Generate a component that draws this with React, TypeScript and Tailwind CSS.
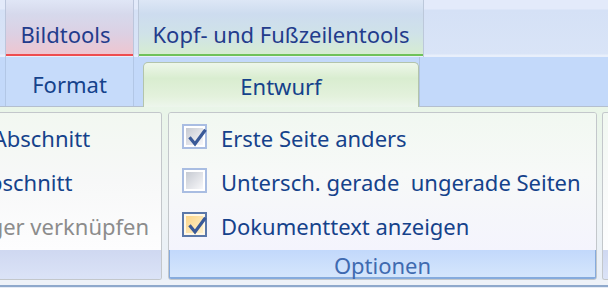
import React from "react";

const Check = () => (
  <svg width="25" height="25" viewBox="0 0 25 25" className="absolute left-0 top-0">
    <path d="M6.5 12.5 L11 18 L20.5 5" fill="none" stroke="#3a5a98" strokeWidth="3.2" strokeLinecap="square" />
  </svg>
);

function Box({ hover, checked }: { hover?: boolean; checked?: boolean }) {
  return (
    <div
      className={
        hover
          ? "relative w-[25px] h-[25px] shrink-0 border-2 border-[#5b78a9] p-[2px] bg-[#fff8e6]"
          : "relative w-[25px] h-[25px] shrink-0 border-2 border-[#a9bde2] p-[2px] bg-white"
      }
    >
      <div
        className={
          hover
            ? "w-full h-full bg-[linear-gradient(135deg,#fbd488,#fff2cc)]"
            : "w-full h-full bg-[linear-gradient(135deg,#c6cad2,#f8f8fa)]"
        }
      />
      {checked && <Check />}
    </div>
  );
}

function OptRow({ label, hover, checked, last }: { label: string; hover?: boolean; checked?: boolean; last?: boolean }) {
  return (
    <div className={last ? "flex items-center gap-[14px] h-[25px]" : "flex items-center gap-[14px] h-[25px] mb-[19px]"}>
      <Box hover={hover} checked={checked} />
      <span className="whitespace-pre pt-[2px] text-[#15428b]">{label}</span>
    </div>
  );
}

function NavRow({ label, disabled, last }: { label: string; disabled?: boolean; last?: boolean }) {
  return (
    <div className={last ? "flex items-center h-[25px]" : "flex items-center h-[25px] mb-[19px]"}>
      <span className={disabled ? "whitespace-pre pt-[2px] text-[#8c8c8c]" : "whitespace-pre pt-[2px] text-[#15428b]"}>{label}</span>
    </div>
  );
}

export default function App() {
  return (
    <div className="w-[608px] h-[288px] overflow-hidden flex flex-col text-[22px] leading-none font-['Noto_Sans',sans-serif] bg-[#c3d9fa]">
      {/* contextual tab group headers */}
      <div className="h-[57px] shrink-0 flex bg-[linear-gradient(to_bottom,#e3eafa_0px,#e3eafa_9px,#d5e1f6_10px,#d9e4f7_54px,#e8effb_55px,#e8effb_57px)]">
        <div className="w-[5px]" />
        <div className="w-[129px] border-x border-[#bcc6dc] flex flex-col">
          <div className="flex-1 flex items-center justify-center pt-[13px] pr-[8px] text-[#233c8c] bg-[linear-gradient(to_bottom,#e0e6f6_0px,#d6d9ec_14px,#dcd0e3_34px,#eec6d0_54px)]">
            Bildtools
          </div>
          <div className="h-[2px] bg-[#ee4d4f]" />
          <div className="h-[1px]" />
        </div>
        <div className="w-[4px]" />
        <div className="w-[286px] border-x border-[#bcc8da] flex flex-col">
          <div className="flex-1 flex items-center justify-center pt-[13px] text-[#233c8c] bg-[linear-gradient(to_bottom,#dde7f6_0px,#cddcef_14px,#cfe2e8_34px,#d6ecd2_54px)]">
            Kopf- und Fußzeilentools
          </div>
          <div className="h-[2px] bg-[#6fc25a]" />
          <div className="h-[1px]" />
        </div>
        <div className="flex-1" />
      </div>

      {/* tabs row */}
      <div className="h-[50px] shrink-0 flex bg-[#c3d9fa]">
        <div className="w-[143px] border-b border-[#b4bfcf] flex">
          <div className="ml-[5px] w-[129px] border-x border-[#b2c7e6] flex items-center justify-center pt-[5px] text-[#15428b] bg-[#c6dbfa]">
            Format
          </div>
        </div>
        <div className="w-[276px] mt-[5px] rounded-t-[5px] border border-b-0 border-[#b3c4ab] bg-[linear-gradient(to_bottom,#eef7ea,#d9edd0_35%,#e3f1dc_75%,#edf6ec)] flex items-center justify-center pt-[1px] text-[#15428b]">
          Entwurf
        </div>
        <div className="flex-1 border-b border-[#b4bfcf] border-l border-l-[#b0c4e0]" />
      </div>

      {/* ribbon body */}
      <div className="flex-1 flex flex-col bg-[linear-gradient(to_bottom,#e9f5e8,#eef3f4_55%,#e8eef8)]">
        <div className="flex pt-[5px] h-[173px] shrink-0">
          {/* navigation group (scrolled off left) */}
          <div className="w-[162px] shrink-0 border-y border-r border-[#c3c7cb] rounded-r-[3px] overflow-hidden flex flex-col">
            <div className="flex-1 pt-[11px] bg-[linear-gradient(to_bottom,#f2f8f1,#f7f8f8_50%,#fdfdfe)]">
              <div className="-ml-[124px]">
                <NavRow label="Vorheriger Abschnitt" />
                <NavRow label="Nächster Abschnitt" />
                <NavRow label="Mit vorheriger verknüpfen" disabled last />
              </div>
            </div>
            <div className="h-[29px] bg-[linear-gradient(to_bottom,#cfd8f1,#dbe3f7)]" />
          </div>

          {/* options group */}
          <div className="ml-[6px] w-[429px] shrink-0 border border-[#c3c7cb] rounded-[3px] overflow-hidden flex flex-col">
            <div className="flex-1 pl-[13px] pt-[11px] bg-[linear-gradient(to_bottom,#f1f8f1,#f7f9f8_45%,#f4f4fd)]">
              <OptRow label="Erste Seite anders" checked />
              <OptRow label="Untersch. gerade  ungerade Seiten" />
              <OptRow label="Dokumenttext anzeigen" hover checked last />
            </div>
            <div className="h-[29px] border-x border-b-2 border-[#86abdd] bg-[linear-gradient(to_bottom,#c2d8fb,#d5e6fc)] flex items-center justify-center pt-[2px] text-[#3f6ab0]">
              Optionen
            </div>
          </div>

          {/* next group, cut off */}
          <div className="ml-[5px] flex-1 border-y border-l border-[#c3c7cb] rounded-l-[3px] overflow-hidden flex flex-col">
            <div className="flex-1 bg-[linear-gradient(to_bottom,#f1f8f1,#f7f9f8_45%,#fdfdfe)]" />
            <div className="h-[29px] bg-[linear-gradient(to_bottom,#cfd8f1,#dbe3f7)]" />
          </div>
        </div>
        <div className="h-[5px] bg-[#eef2f8]" />
        <div className="h-[2px] bg-[#8fa9cc]" />
        <div className="flex-1 bg-[#e4ebf6]" />
      </div>
    </div>
  );
}
